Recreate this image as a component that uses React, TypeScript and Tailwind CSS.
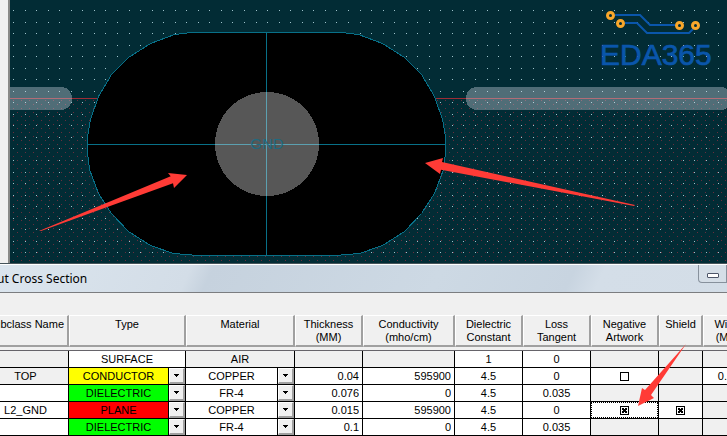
import React from "react";

const gridXs = Array.from({ length: 160 }, (_, i) => Math.round(13 + i * 11.55));
const gridYs = Array.from({ length: 22 }, (_, i) => Math.round(10 + i * 11.54));
const gridPath = gridYs.map((y) => gridXs.map((x) => `M${x} ${y}h1v1h-1z`).join("")).join("");

const leftUpper = [
  [191, 32], [174, 34], [150, 43], [128, 57], [111, 74], [98, 96], [90, 119], [87, 136],
];
const leftLower = [
  [87, 152], [89, 169], [98, 193], [111, 213], [128, 231], [150, 245], [173, 253], [198, 255],
];
const leftSide = [...leftUpper, ...leftLower];
const rightSide = [...leftSide].reverse().map(([x, y]) => [532 - x, y]);
const antipad = [...leftSide, ...rightSide].map(([x, y]) => `${x + 0.5},${y + 0.5}`).join(" ");

function BoardCanvas() {
  return (
    <div className="flex h-[263px] bg-[#022c35]">
      <div className="w-[10px] shrink-0 border-r-2 border-[#8a8a88] bg-[#f0f0f0]" />
      <div className="relative min-w-0 flex-1 overflow-hidden">
        <svg className="block h-[263px] w-full" role="img" aria-label="Pad with antipad on the ground plane">
          <defs>
            <pattern id="plane" width="8" height="8" patternUnits="userSpaceOnUse">
              <path d="M1 0h1v1h-1zM5 4h1v1h-1z" fill="#682d3c" shapeRendering="crispEdges" />
            </pattern>
          </defs>
          <g transform="translate(-10 0)">
            <rect x="10" y="99" width="3000" height="164" fill="url(#plane)" />
            <path d={gridPath} fill="#9fc4cc" shapeRendering="crispEdges" />
            <path d="M10 98.5H3000" stroke="#9c2c35" />
            <g fill="#dbe0ee" fillOpacity="0.36" shapeRendering="crispEdges">
              <rect x="-20" y="87" width="92" height="23" rx="11" />
              <rect x="466" y="87" width="266" height="23" rx="11" />
            </g>
            <polygon points={antipad} fill="#000" stroke="#087088" shapeRendering="crispEdges" />
            <path d="M266.5 32V256M88 144.5H446" stroke="#087088" />
            <circle cx="267" cy="144" r="52" fill="#fff" fillOpacity="0.34" shapeRendering="crispEdges" />
            <text x="267" y="149" textAnchor="middle" fontSize="15" fill="#1f6a80" fontFamily="Liberation Sans, Arial, sans-serif">
              GND
            </text>
            <g fill="#ff3b36">
              <path d="M39 231L170.700 176.300L168 173L187 175L174 188L173 183.300L41 231Z" />
              <path d="M635 205L442 162L443 158L425 163L440 174L441 169.700L634 206Z" />
            </g>
          </g>
        </svg>
        <Logo />
      </div>
    </div>
  );
}

function Logo() {
  return (
    <svg className="absolute top-[8px] right-[13px] h-[62px] w-[114px]" viewBox="600 8 114 62" role="img" aria-label="EDA365 logo">
      <g fill="none" stroke="#0a56ab" strokeWidth="2">
        <path d="M615 15H640L650 25H675" />
        <path d="M625 23H637L647 33H689L693 29" />
      </g>
      <g fill="none" stroke="#f9a72b" strokeWidth="3">
        <circle cx="610.500" cy="15.500" r="3" />
        <circle cx="620.500" cy="23.500" r="3" />
        <circle cx="679.500" cy="25.500" r="3" />
        <circle cx="695.500" cy="25.500" r="3" />
      </g>
      <text x="600" y="65" fontSize="30" fill="#0a56ab" stroke="#0a56ab" strokeWidth="0.7" fontFamily="Liberation Sans, Arial, sans-serif">
        EDA365
      </text>
    </svg>
  );
}

const columns: { lines: string[]; width: string }[] = [
  { lines: ["Subclass Name"], width: "w-[86px]" },
  { lines: ["Type"], width: "w-[117px]" },
  { lines: ["Material"], width: "w-[109px]" },
  { lines: ["Thickness", "(MM)"], width: "w-[68px]" },
  { lines: ["Conductivity", "(mho/cm)"], width: "w-[92px]" },
  { lines: ["Dielectric", "Constant"], width: "w-[68px]" },
  { lines: ["Loss", "Tangent"], width: "w-[68px]" },
  { lines: ["Negative", "Artwork"], width: "w-[68px]" },
  { lines: ["Shield"], width: "w-[44px]" },
  { lines: ["Width", "(MM)"], width: "w-[52px]" },
];

type Layer = {
  name: string;
  type: string;
  typeColor: string;
  material: string;
  thickness: string;
  conductivity: string;
  dielectric: string;
  loss: string;
  negative?: boolean;
  shield?: boolean;
  width?: string;
};

const layers: Layer[] = [
  { name: "TOP", type: "CONDUCTOR", typeColor: "bg-[#ffff00]", material: "COPPER", thickness: "0.04", conductivity: "595900", dielectric: "4.5", loss: "0", negative: false, width: "0.10" },
  { name: "", type: "DIELECTRIC", typeColor: "bg-[#00ff00]", material: "FR-4", thickness: "0.076", conductivity: "0", dielectric: "4.5", loss: "0.035" },
  { name: "L2_GND", type: "PLANE", typeColor: "bg-[#ff0000]", material: "COPPER", thickness: "0.015", conductivity: "595900", dielectric: "4.5", loss: "0", negative: true, shield: true },
  { name: "", type: "DIELECTRIC", typeColor: "bg-[#00ff00]", material: "FR-4", thickness: "0.1", conductivity: "0", dielectric: "4.5", loss: "0.035" },
];

const cell = "h-[17px] border-r border-b border-black p-0 text-center";
const gray = "bg-[#f0f0f0]";
const white = "bg-white";

function Picker({ value, label, color }: { value: string; label: string; color: string }) {
  return (
    <div className="relative flex h-[16px]">
      <select
        aria-label={label}
        defaultValue={value}
        className={`h-[16px] w-full appearance-none pr-[17px] text-center leading-[16px] [text-align-last:center] ${color}`}
      >
        <option>{value}</option>
      </select>
      <span className="pointer-events-none absolute top-0 right-0 flex h-[16px] w-[17px] border-l border-black">
        <span className="flex flex-1 items-center justify-center border-t border-r-2 border-b-2 border-l border-t-white border-r-[#a0a0a0] border-b-[#a0a0a0] border-l-white bg-[#f0f0f0]">
          <svg className="h-[3px] w-[5px]" viewBox="0 0 5 3" shapeRendering="crispEdges">
            <path d="M0 0h5v1h-1v1h-1v1h-1v-1h-1v-1h-1z" />
          </svg>
        </span>
      </span>
    </div>
  );
}

function ValueBox({ value, label, right = false }: { value: string; label: string; right?: boolean }) {
  return (
    <input
      type="text"
      aria-label={label}
      defaultValue={value}
      className={`block h-[16px] w-full bg-white leading-[16px] ${right ? "pr-[3px] text-right" : "text-center"}`}
    />
  );
}

function TickBox({ checked, label }: { checked: boolean; label: string }) {
  return (
    <span className="relative mx-auto flex size-[9px]">
      <input
        type="checkbox"
        aria-label={label}
        defaultChecked={checked}
        className="peer size-[9px] appearance-none border border-black bg-white"
      />
      <svg
        className="pointer-events-none absolute inset-0 hidden size-[9px] peer-checked:block"
        viewBox="0 0 9 9"
        shapeRendering="crispEdges"
      >
        <path d="M2 2h2v1h1v-1h2v2h-1v1h1v2h-2v-1h-1v1h-2v-2h1v-1h-1z" />
      </svg>
    </span>
  );
}

function CrossSectionTable() {
  return (
    <table className="-ml-[17px] w-[772px] table-fixed border-separate border-spacing-0 text-[11px] leading-[13px] text-black">
      <thead>
        <tr>
          {columns.map((c) => (
            <th key={c.lines[0]} scope="col" className={`h-[36px] border-b border-[#66646a] p-0 align-top font-normal ${c.width}`}>
              <div className="h-[32px] border-t border-r-2 border-b-2 border-l border-t-white border-r-[#a0a0a0] border-b-[#a0a0a0] border-l-white pt-[2px]">
                {c.lines.map((l) => (
                  <div key={l}>{l}</div>
                ))}
              </div>
            </th>
          ))}
        </tr>
      </thead>
      <tbody>
        <tr>
          <td className={`${cell} ${gray}`} />
          <td className={`${cell} ${white}`}>SURFACE</td>
          <td className={`${cell} ${gray}`}>AIR</td>
          <td className={`${cell} ${gray}`} />
          <td className={`${cell} ${gray}`} />
          <td className={`${cell} ${white}`}>
            <ValueBox value="1" label="Surface dielectric constant" />
          </td>
          <td className={`${cell} ${white}`}>
            <ValueBox value="0" label="Surface loss tangent" />
          </td>
          <td className={`${cell} ${gray}`} />
          <td className={`${cell} ${gray}`} />
          <td className={`${cell} ${gray}`} />
        </tr>
        {layers.map((l, i) => {
          const id = l.name || `Dielectric ${i}`;
          return (
            <tr key={id}>
              <td className={`${cell} ${l.name === "TOP" ? gray : white}`}>{l.name}</td>
              <td className={cell}>
                <Picker value={l.type} label={`${id} type`} color={l.typeColor} />
              </td>
              <td className={cell}>
                <Picker value={l.material} label={`${id} material`} color="bg-white" />
              </td>
              <td className={cell}>
                <ValueBox value={l.thickness} label={`${id} thickness`} right />
              </td>
              <td className={cell}>
                <ValueBox value={l.conductivity} label={`${id} conductivity`} right />
              </td>
              <td className={cell}>
                <ValueBox value={l.dielectric} label={`${id} dielectric constant`} />
              </td>
              <td className={cell}>
                <ValueBox value={l.loss} label={`${id} loss tangent`} />
              </td>
              <td className={`${cell} ${l.negative === undefined ? gray : white}`}>
                {l.negative !== undefined && (
                  <div className={`flex h-[16px] items-center ${l.negative ? "border border-dotted border-black" : ""}`}>
                    <TickBox checked={l.negative} label={`${id} negative artwork`} />
                  </div>
                )}
              </td>
              <td className={`${cell} ${l.shield === undefined ? gray : white}`}>
                {l.shield !== undefined && <TickBox checked={l.shield} label={`${id} shield`} />}
              </td>
              <td className={`${cell} ${l.width ? white : gray}`}>
                {l.width && <ValueBox value={l.width} label={`${id} width`} />}
              </td>
            </tr>
          );
        })}
      </tbody>
    </table>
  );
}

export default function App() {
  return (
    <main className="overflow-hidden bg-[#f0f0f0] font-['Liberation_Sans',Arial,sans-serif]">
      <BoardCanvas />
      <section className="relative border-t border-[#46545a]">
        <header className="flex h-[29px] items-start justify-between border-t border-b border-t-white border-b-[#7b7d80] bg-[linear-gradient(115deg,#dbe5ee_0%,#d3dde7_26%,#c6d2de_29%,#cdd9e4_60%,#c8d4e0_78%,#d4dee8_82%,#d3dde7_100%)]">
          <h1 className="-ml-[3px] font-['Noto_Sans','Open_Sans',sans-serif] text-[12px] leading-[27px] text-black">ut Cross Section</h1>
          <button
            type="button"
            aria-label="Minimize"
            className="flex h-[18px] w-[29px] items-end justify-center rounded-bl border-r border-b border-l border-[#87919c] bg-[#d5dee7] pb-[4px]"
          >
            <span className="h-[5px] w-[12px] rounded-[1px] border border-[#4d5568] bg-white" />
          </button>
        </header>
        <div className="pt-[22px]">
          <CrossSectionTable />
        </div>
        <svg className="pointer-events-none absolute top-[80px] left-[637px] h-[63px] w-[50px]" viewBox="637 343 50 63">
          <path d="M686 343L645 389L642 387L638 405L654 397L651 394Z" fill="#ff3b36" />
        </svg>
      </section>
    </main>
  );
}
